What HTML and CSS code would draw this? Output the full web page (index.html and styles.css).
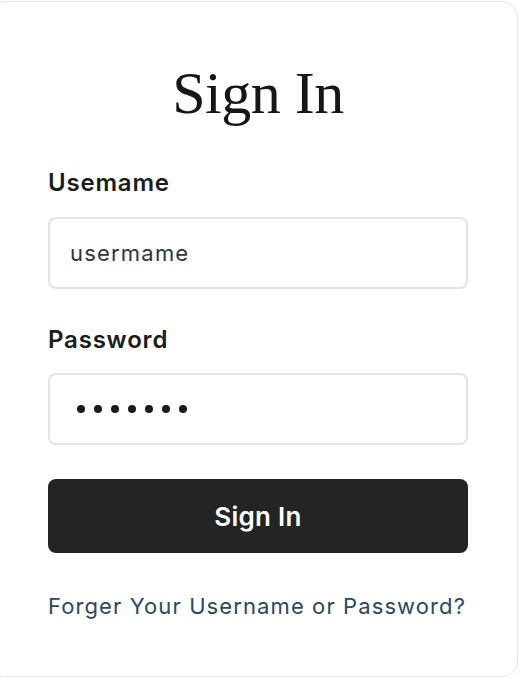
FILE: index.html
```html
<!DOCTYPE html>
<html lang="en">
<head>
<meta charset="utf-8">
<title>Sign In</title>
<link rel="stylesheet" href="styles.css">
</head>
<body>
<div class="card">
  <h1 class="title">Sign In</h1>
  <form class="form">
    <label class="label" for="u">Usemame</label>
    <div class="field"><span class="value">usermame</span></div>
    <label class="label label-pw" for="p">Password</label>
    <div class="field"><span class="dots"><i></i><i></i><i></i><i></i><i></i><i></i><i></i></span></div>
    <div class="button">Sign In</div>
    <a class="link" href="#">Forger Your Username or Password?</a>
  </form>
</div>
</body>
</html>
```
FILE: styles.css
```css
html, body {
  margin: 0;
  padding: 0;
  background: #ffffff;
}
body {
  width: 520px;
  height: 678px;
  overflow: hidden;
  font-family: "Inter", "Liberation Sans", sans-serif;
}
.card {
  box-sizing: border-box;
  width: 530px;
  height: 676px;
  margin: 1px 0 0 -12px;
  padding: 61px 49px 0 59px;
  border: 1px solid #e6e6e6;
  border-radius: 16px;
  background: #fff;
}
.title {
  margin: 0;
  font-family: "Liberation Serif", "Times New Roman", serif;
  font-weight: normal;
  font-size: 60px;
  line-height: 60px;
  color: #161616;
  text-align: center;
  letter-spacing: -0.5px;
}
.form {
  display: flex;
  flex-direction: column;
  margin-top: 45px;
}
.label {
  display: block;
  font-size: 24px;
  line-height: 30px;
  font-weight: 600;
  letter-spacing: 0.8px;
  color: #1c1c1c;
  margin-bottom: 19px;
}
.label-pw {
  margin-top: 36px;
  margin-bottom: 18px;
}
.field {
  box-sizing: border-box;
  height: 72px;
  border: 2px solid #e3e3e3;
  border-radius: 8px;
  display: flex;
  align-items: center;
  padding-left: 20px;
}
.value {
  font-size: 22px;
  letter-spacing: 1.2px;
  color: #2b3544;
}
.dots {
  display: flex;
  gap: 9px;
  padding-left: 6.5px;
}
.dots i {
  display: block;
  width: 8px;
  height: 8px;
  border-radius: 50%;
  background: #1a1a1a;
}
.button {
  margin-top: 34px;
  height: 74px;
  border-radius: 8px;
  background: #242424;
  color: #ffffff;
  font-size: 26px;
  font-weight: 600;
  letter-spacing: 0.3px;
  display: flex;
  align-items: center;
  justify-content: center;
}
.link {
  margin-top: 40px;
  font-size: 22px;
  line-height: 26px;
  letter-spacing: 1.1px;
  color: #2a4866;
  text-decoration: none;
}
```
